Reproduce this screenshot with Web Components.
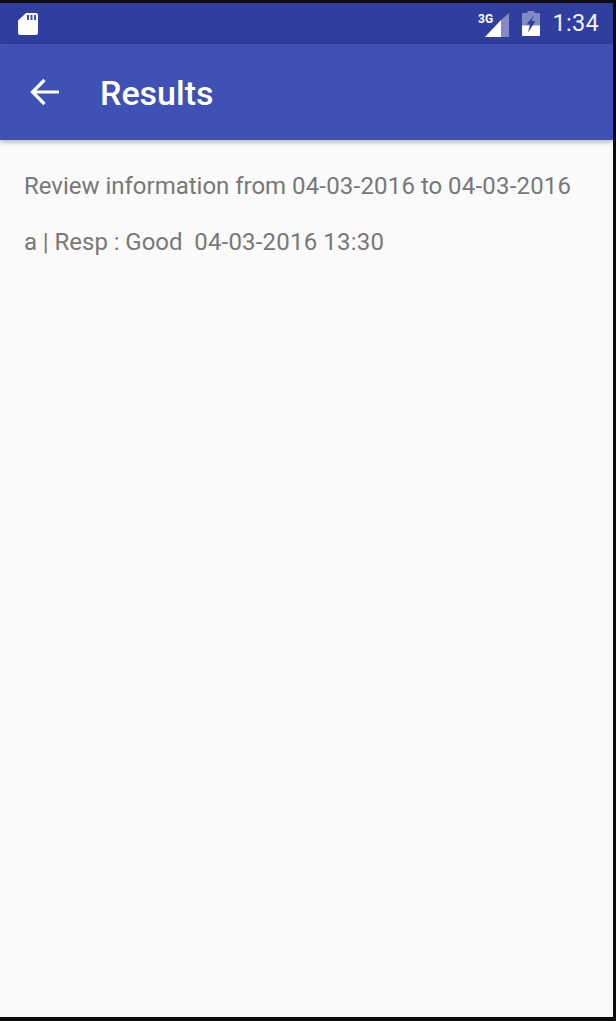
<!DOCTYPE html>
<html>
<head>
<meta charset="utf-8">
<title>Results</title>
<style>
  html, body { margin: 0; height: 100%; background: #0c0c0e; }
  body { font-family: Roboto, "Noto Sans", sans-serif; }
</style>
</head>
<body>
<phone-screen>
  <status-bar slot="top"></status-bar>
  <app-bar slot="top" title="Results"></app-bar>
  <result-list from="04-03-2016" to="04-03-2016">
    <result-row>a | Resp : Good&nbsp; <span>04-03-2016 13:30</span></result-row>
  </result-list>
</phone-screen>

<script>
class PhoneScreen extends HTMLElement {
  constructor() {
    super();
    this.attachShadow({ mode: "open" });
    this.shadowRoot.innerHTML = `
      <style>
        :host { display: block; box-sizing: border-box; width: 616px; height: 1021px; padding: 3px 3px 4px 0; }
        .screen { height: 100%; display: flex; flex-direction: column; background: #fafafa; }
        .body { flex: 1; }
      </style>
      <div class="screen">
        <slot name="top"></slot>
        <div class="body"><slot></slot></div>
      </div>
    `;
  }
}
customElements.define("phone-screen", PhoneScreen);

class StatusBar extends HTMLElement {
  constructor() {
    super();
    this.attachShadow({ mode: "open" });
    this.shadowRoot.innerHTML = `
      <style>
        :host { display: flex; align-items: center; height: 41px; padding: 0 14px 0 18px; background: #303f9f; color: #fff; flex: none; }
        svg { display: block; }
        .right { margin-left: auto; display: flex; align-items: center; }
        .net { margin-right: 13px; }
        .bat { margin-right: 12px; }
        .clock { font-size: 23.500px; line-height: 41px; letter-spacing: .3px; color: #f2f3fa; }
      </style>
      <svg width="20" height="24" viewBox="0 0 20 24">
        <path fill="#fff" d="M8 1h10a2 2 0 0 1 2 2v18a2 2 0 0 1-2 2H2a2 2 0 0 1-2-2V8.500z"/>
        <path fill="#3f4ca8" d="M9 3h2v5H9zM12.500 3h2v5h-2zM16 3h2v5h-2z"/>
      </svg>
      <div class="right">
        <svg class="net" width="32" height="26" viewBox="0 0 32 26">
          <path fill="#fff" fill-opacity=".4" d="M32 2v24H24V9z"/>
          <path fill="#fff" d="M24 9v17H8z"/>
          <text x="1" y="11.500" font-family="Roboto, sans-serif" font-size="12" font-weight="700" fill="#fff">3G</text>
        </svg>
        <svg class="bat" width="18" height="25" viewBox="0 0 18 25">
          <path fill="#fff" fill-opacity=".4" d="M5.500 2V0h7v2H17a1 1 0 0 1 1 1v21a1 1 0 0 1-1 1H1a1 1 0 0 1-1-1V3a1 1 0 0 1 1-1z"/>
          <path fill="#fff" d="M0 24V14.500H18V24a1 1 0 0 1-1 1H1a1 1 0 0 1-1-1z"/>
          <path fill="#303f9f" d="M12 4 4.500 13.500h3.500l-2 8 7.500-11.500h-4z"/>
        </svg>
        <span class="clock">1:34</span>
      </div>
    `;
  }
}
customElements.define("status-bar", StatusBar);

class AppBar extends HTMLElement {
  constructor() {
    super();
    this.attachShadow({ mode: "open" });
  }
  connectedCallback() {
    const title = this.getAttribute("title") || "";
    this.shadowRoot.innerHTML = `
      <style>
        :host { display: flex; align-items: center; height: 96px; padding-left: 30px; background: #3f51b5; box-shadow: 0 2px 5px rgba(0,0,0,.3); position: relative; flex: none; }
        svg { display: block; margin-right: 40px; }
        h1 { margin: 0; padding-top: 3px; font-size: 34px; font-weight: 500; color: #fff; line-height: 93px; }
      </style>
      <svg width="30" height="28" viewBox="0 0 30 28" fill="none" stroke="#fff" stroke-width="3.200">
        <path d="M29 14H3M14.500 2 2.500 14l12 12"/>
      </svg>
      <h1>${title}</h1>
    `;
  }
}
customElements.define("app-bar", AppBar);

class ResultList extends HTMLElement {
  constructor() {
    super();
    this.attachShadow({ mode: "open" });
  }
  connectedCallback() {
    const from = this.getAttribute("from") || "";
    const to = this.getAttribute("to") || "";
    this.shadowRoot.innerHTML = `
      <style>
        :host { display: block; padding: 30px 24px 0; color: #787878; font-size: 24px; word-spacing: -.15px; }
        p { margin: 0 0 24px; line-height: 32px; white-space: nowrap; }
        span { letter-spacing: .2px; }
      </style>
      <p>Review information from <span>${from}</span> to <span>${to}</span></p>
      <slot></slot>
    `;
  }
}
customElements.define("result-list", ResultList);

class ResultRow extends HTMLElement {
  constructor() {
    super();
    this.attachShadow({ mode: "open" });
    this.shadowRoot.innerHTML = `
      <style>
        :host { display: block; line-height: 32px; white-space: nowrap; }
        ::slotted(span) { letter-spacing: .2px; }
      </style>
      <slot></slot>
    `;
  }
}
customElements.define("result-row", ResultRow);
</script>
</body>
</html>
